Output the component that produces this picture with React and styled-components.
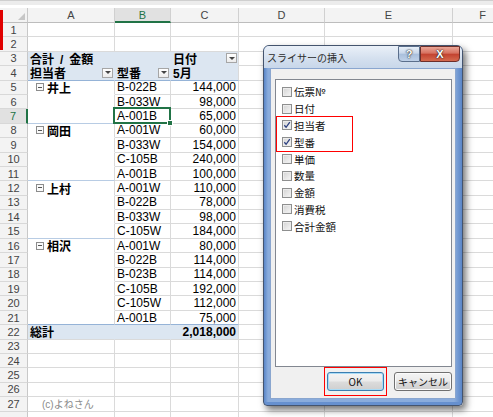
import React from 'react'
import styled, { createGlobalStyle } from 'styled-components'

const GlobalStyle = createGlobalStyle`
  html, body { margin: 0; padding: 0; background: #fff; }
  body { font-family: "Liberation Sans", "Noto Sans CJK JP", sans-serif; }
`;

const COLS = [28, 87, 56, 68, 86, 128, 60];
const ROW_H = 14.4;
const GRID = '#dadada';
const PIVOT_BG = '#dce6f1';
const PIVOT_LINE = '#95b3d7';
const GROUP_LINE = '#b8cce4';
const GREEN = '#217346';

const Screen = styled.div`
  position: relative;
  width: 493px;
  height: 417px;
  overflow: hidden;
  background: #fff;
`;

const TopStrip = styled.div`
  height: 8px;
  background: linear-gradient(#cfcfcf 0, #cfcfcf 1px, #ececec 1px, #ececec 5px, #fff 5px);
`;

const RedMark = styled.div`
  position: absolute;
  left: 0;
  top: 10px;
  width: 3px;
  height: 40px;
  background: #e00000;
`;

const Grid = styled.div`
  display: grid;
  grid-template-columns: ${COLS.map(c => c + 'px').join(' ')};
  grid-template-rows: 15px;
  grid-auto-rows: ${ROW_H}px;
`;

const Corner = styled.div`
  position: relative;
  box-sizing: border-box;
  background: #f3f3f3;
  border-right: 1px solid #c8c8c8;
  border-bottom: 1px solid #bdbdbd;
  &::after {
    content: '';
    position: absolute;
    right: 2px;
    bottom: 2px;
    border-left: 7px solid transparent;
    border-bottom: 7px solid #c6c6c6;
  }
`;

const ColHead = styled.div`
  box-sizing: border-box;
  display: flex;
  align-items: center;
  justify-content: center;
  font-size: 11px;
  color: ${p => (p.$active ? GREEN : '#444')};
  background: ${p => (p.$active ? '#e1e1e1' : '#f3f3f3')};
  border-right: 1px solid #d0d0d0;
  border-bottom: ${p => (p.$active ? `2px solid ${GREEN}` : '1px solid #bdbdbd')};
`;

const RowHead = styled.div`
  box-sizing: border-box;
  display: flex;
  align-items: center;
  justify-content: center;
  font-size: 11px;
  color: ${p => (p.$active ? GREEN : '#444')};
  background: ${p => (p.$active ? '#e1e1e1' : '#f3f3f3')};
  border-right: ${p => (p.$active ? `2px solid ${GREEN}` : '1px solid #c8c8c8')};
  border-bottom: 1px solid #d8d8d8;
`;

const Cell = styled.div`
  box-sizing: border-box;
  display: flex;
  align-items: center;
  justify-content: ${p => (p.$num ? 'flex-end' : 'flex-start')};
  padding: 0 2px 0 ${p => p.$indent || 2}px;
  border-right: 1px solid ${p => p.$right || GRID};
  border-bottom: 1px solid ${p => p.$bottom || GRID};
  background: ${p => p.$bg || '#fff'};
  font-size: ${p => (p.$note ? '10px' : '12px')};
  font-weight: ${p => (p.$bold ? 700 : 400)};
  color: ${p => (p.$note ? '#8a8a8a' : '#000')};
  white-space: pre;
  position: ${p => (p.$selected ? 'relative' : 'static')};
`;

const Selection = styled.span`
  position: absolute;
  left: -2px;
  top: -2px;
  right: -1px;
  bottom: -1px;
  border: 2px solid ${GREEN};
  &::after {
    content: '';
    position: absolute;
    right: -4px;
    bottom: -4px;
    width: 4px;
    height: 4px;
    background: ${GREEN};
    border: 1px solid #fff;
  }
`;

const Collapse = styled.span`
  box-sizing: border-box;
  width: 8px;
  height: 8px;
  margin: 0 3px 0 0;
  border: 1px solid #8c8c8c;
  background: #fafafa;
  display: inline-flex;
  align-items: center;
  justify-content: center;
  &::after {
    content: '';
    width: 4px;
    height: 1px;
    background: #555;
  }
`;

const Drop = styled.span`
  box-sizing: border-box;
  width: 11px;
  height: 10px;
  margin-left: auto;
  margin-right: -1px;
  border: 1px solid #a6a6a6;
  background: linear-gradient(#ffffff, #ececec);
  display: flex;
  align-items: center;
  justify-content: center;
  &::after {
    content: '';
    border-left: 3px solid transparent;
    border-right: 3px solid transparent;
    border-top: 3px solid #444;
  }
`;

/* dialog */

const Window = styled.div`
  position: absolute;
  left: 263px;
  top: 45px;
  width: 200px;
  height: 361px;
  box-sizing: border-box;
  display: flex;
  flex-direction: column;
  padding: 0 6px 6px;
  border: 1px solid #44546e;
  border-radius: 6px 6px 4px 4px;
  background: linear-gradient(90deg, #5a86c8 0, #8aacdc 4px, #8aacdc 190px, #5a86c8 198px);
  box-shadow: inset 0 -3px 0 #6690cf, 3px 4px 7px rgba(0, 0, 0, 0.55);
  font-family: "Noto Sans CJK JP", "Liberation Sans", sans-serif;
`;

const TitleBar = styled.div`
  height: 22px;
  margin: 0 -6px;
  padding: 0 2px 0 3px;
  display: flex;
  align-items: flex-start;
  border-radius: 5px 5px 0 0;
  background: linear-gradient(#eaf0f8, #d3dfee 60%, #c8d7ea);
`;

const Title = styled.div`
  flex: 1;
  margin-top: 6px;
  font-size: 10px;
  line-height: 12px;
  color: #2b2b2b;
`;

const CapButton = styled.div`
  box-sizing: border-box;
  height: 16px;
  width: ${p => (p.$close ? 40 : 22)}px;
  display: flex;
  align-items: center;
  justify-content: center;
  font-family: "Liberation Sans", sans-serif;
  font-weight: 700;
  font-size: 11px;
  color: #fff;
  text-shadow: 0 0 2px #333, 0 0 1px #000;
  border: 1px solid ${p => (p.$close ? '#6d2f2a' : '#5b6f8c')};
  border-radius: ${p => (p.$close ? '0 0 4px 0' : '0 0 0 4px')};
  background: ${p =>
    p.$close
      ? 'linear-gradient(#eaa596, #d6705f 45%, #c2412f 50%, #d56a4f)'
      : 'linear-gradient(#e9f0f8, #c7d6ea 45%, #a9bfdc 50%, #bfd1e8)'};
`;

const Client = styled.div`
  flex: 1;
  display: flex;
  flex-direction: column;
  padding: 10px 3px 2px 4px;
  background: #f0f0f0;
  border: 1px solid #8aa6cf;
`;

const ListBox = styled.div`
  flex: 1;
  padding-top: 3.5px;
  background: #fff;
  border: 1px solid #828790;
`;

const Highlight = styled.div`
  width: 77px;
  box-sizing: border-box;
  margin: -1px 0;
  border: 1px solid #ff0000;
`;

const Item = styled.div`
  height: 16.8px;
  display: flex;
  align-items: center;
  padding-left: ${p => (p.$inBox ? 5 : 6)}px;
  font-size: 10.5px;
  color: #111;
`;

const Box = styled.span`
  box-sizing: border-box;
  width: 10px;
  height: 10px;
  margin-right: 2px;
  display: flex;
  align-items: center;
  justify-content: center;
  border: 1px solid #8e8f8f;
  background: linear-gradient(135deg, #d2d2d2, #f7f7f7);
  box-shadow: inset 0 0 0 1px #ececec;
`;

const ButtonRow = styled.div`
  height: 29px;
  display: flex;
  align-items: center;
  justify-content: flex-end;
  gap: 7px;
`;

const OkMark = styled.div`
  padding: 4px 2px;
  border: 1px solid #ff0000;
`;

const Button = styled.div`
  box-sizing: border-box;
  width: ${p => p.$w}px;
  height: 19px;
  display: flex;
  align-items: center;
  justify-content: center;
  font-size: 10px;
  color: #111;
  border-radius: 3px;
  border: 1px solid ${p => (p.$focus ? '#3c7fb1' : '#707070')};
  background: linear-gradient(#f4f4f4, #ebebeb 48%, #dcdcdc 52%, #cfcfcf);
  box-shadow: ${p => (p.$focus ? 'inset 0 0 0 1px #a9dbf6' : 'inset 0 0 0 1px #fbfbfb')};
`;

const groups = [
  { name: '井上', items: [['B-022B', '144,000'], ['B-033W', '98,000'], ['A-001B', '65,000']] },
  { name: '岡田', items: [['A-001W', '60,000'], ['B-033W', '154,000'], ['C-105B', '240,000'], ['A-001B', '100,000']] },
  { name: '上村', items: [['A-001W', '110,000'], ['B-022B', '78,000'], ['B-033W', '98,000'], ['C-105W', '184,000']] },
  { name: '相沢', items: [['A-001W', '80,000'], ['B-022B', '114,000'], ['B-023B', '114,000'], ['C-105B', '192,000'], ['C-105W', '112,000'], ['A-001B', '75,000']] },
];

function buildRows() {
  const blank = () => [{}, {}, {}, {}, {}, {}];
  const rows = [blank(), blank()];
  rows.push([
    { text: '合計\u2002/\u2002金額', bold: true, bg: PIVOT_BG, right: PIVOT_BG, bottom: PIVOT_BG },
    { bg: PIVOT_BG, right: PIVOT_BG, bottom: PIVOT_BG },
    { text: '日付', bold: true, bg: PIVOT_BG, bottom: PIVOT_BG, drop: true },
    {}, {}, {},
  ]);
  rows.push([
    { text: '担当者', bold: true, bg: PIVOT_BG, right: PIVOT_BG, bottom: PIVOT_LINE, drop: true },
    { text: '型番', bold: true, bg: PIVOT_BG, right: PIVOT_BG, bottom: PIVOT_LINE, drop: true },
    { text: '5月', bold: true, bg: PIVOT_BG, bottom: PIVOT_LINE },
    {}, {}, {},
  ]);
  groups.forEach((g, gi) => {
    g.items.forEach(([code, amount], i) => {
      const last = i === g.items.length - 1;
      const end = last && gi === groups.length - 1;
      rows.push([
        {
          text: i === 0 ? g.name : '',
          group: i === 0,
          bold: true,
          bottom: last ? (end ? PIVOT_LINE : GROUP_LINE) : '#fff',
        },
        { text: code, bottom: end ? PIVOT_LINE : undefined, selected: gi === 0 && i === 2 },
        { text: amount, num: true, bottom: end ? PIVOT_LINE : undefined },
        {}, {}, {},
      ]);
    });
  });
  rows.push([
    { text: '総計', bold: true, bg: PIVOT_BG, right: PIVOT_BG },
    { bg: PIVOT_BG, right: PIVOT_BG },
    { text: '2,018,000', bold: true, num: true, bg: PIVOT_BG },
    {}, {}, {},
  ]);
  for (let r = 23; r <= 28; r++) {
    const row = blank();
    if (r === 27) row[0] = { text: '(c)よねさん', note: true };
    rows.push(row);
  }
  return rows;
}

const rows = buildRows();
const letters = ['A', 'B', 'C', 'D', 'E', 'F'];

const fields = [
  { label: '伝票№' },
  { label: '日付' },
  { label: '担当者', checked: true },
  { label: '型番', checked: true },
  { label: '単価' },
  { label: '数量' },
  { label: '金額' },
  { label: '消費税' },
  { label: '合計金額' },
];

const Check = ({ checked }) => (
  <Box>
    {checked && (
      <svg width="8" height="8" viewBox="0 0 8 8">
        <path d="M1.3 4.3 L3.1 6.3 L6.8 1.2" fill="none" stroke="#2b3f80" strokeWidth="1.3" />
      </svg>
    )}
  </Box>
);

const Field = ({ field, inBox }) => (
  <Item $inBox={inBox}>
    <Check checked={field.checked} />
    {field.label}
  </Item>
);

const SlicerDialog = () => (
  <Window>
    <TitleBar>
      <Title>スライサーの挿入</Title>
      <CapButton>?</CapButton>
      <CapButton $close>X</CapButton>
    </TitleBar>
    <Client>
      <ListBox>
        {fields.slice(0, 2).map(f => <Field key={f.label} field={f} />)}
        <Highlight>
          {fields.slice(2, 4).map(f => <Field key={f.label} field={f} inBox />)}
        </Highlight>
        {fields.slice(4).map(f => <Field key={f.label} field={f} />)}
      </ListBox>
      <ButtonRow>
        <OkMark>
          <Button $w={57} $focus>OK</Button>
        </OkMark>
        <Button $w={58}>キャンセル</Button>
      </ButtonRow>
    </Client>
  </Window>
);

const App = () => (
  <Screen>
    <GlobalStyle />
    <TopStrip />
    <Grid>
      <Corner />
      {letters.map(l => (
        <ColHead key={l} $active={l === 'B'}>{l}</ColHead>
      ))}
      {rows.map((cells, ri) => (
        <React.Fragment key={ri}>
          {/* the last row is cut by the window edge, so its number isn't shown */}
          <RowHead $active={ri === 6}>{ri < rows.length - 1 ? ri + 1 : ''}</RowHead>
          {cells.map((c, ci) => (
            <Cell
              key={ci}
              $bg={c.bg}
              $right={c.right}
              $bottom={c.bottom}
              $bold={c.bold}
              $num={c.num}
              $note={c.note}
              $indent={c.group ? 8 : c.note ? 14 : 2}
              $selected={c.selected}
            >
              {c.group && <Collapse />}
              {c.text}
              {c.drop && <Drop />}
              {c.selected && <Selection />}
            </Cell>
          ))}
        </React.Fragment>
      ))}
    </Grid>
    <RedMark />
    <SlicerDialog />
  </Screen>
);

export default App
